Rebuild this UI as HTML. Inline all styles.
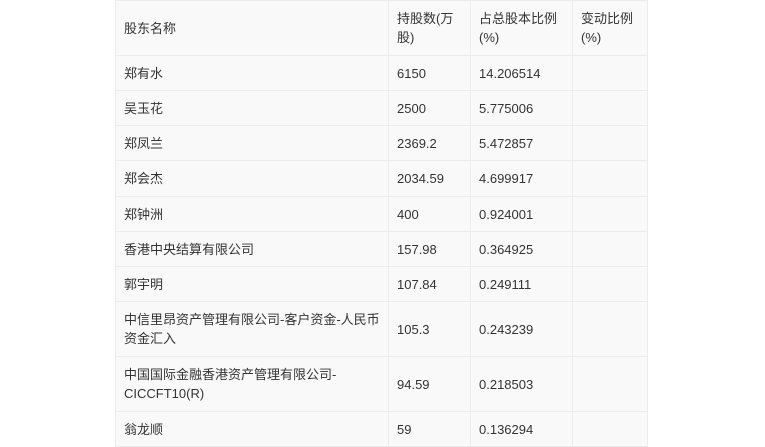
<!DOCTYPE html>
<html><head><meta charset="utf-8"><style>
html,body{margin:0;padding:0;background:#fff;width:765px;height:447px;overflow:hidden}
table{position:absolute;left:115px;top:0;border-collapse:collapse;font-family:"Liberation Sans","Noto Sans CJK SC",sans-serif;font-size:13px;color:#333;background:#f9f9f9}
td{border:1px solid #ececec;padding:0 8px;vertical-align:middle;line-height:19px}
</style></head><body>
<table>
<colgroup><col style="width:273px"><col style="width:82px"><col style="width:102px"><col style="width:75px"></colgroup>
<tr style="height:55px"><td>股东名称</td><td>持股数(万股)</td><td>占总股本比例(%)</td><td>变动比例(%)</td></tr>
<tr style="height:35px"><td>郑有水</td><td>6150</td><td>14.206514</td><td></td></tr>
<tr style="height:35px"><td>吴玉花</td><td>2500</td><td>5.775006</td><td></td></tr>
<tr style="height:35px"><td>郑凤兰</td><td>2369.2</td><td>5.472857</td><td></td></tr>
<tr style="height:36px"><td>郑会杰</td><td>2034.59</td><td>4.699917</td><td></td></tr>
<tr style="height:35px"><td>郑钟洲</td><td>400</td><td>0.924001</td><td></td></tr>
<tr style="height:35px"><td>香港中央结算有限公司</td><td>157.98</td><td>0.364925</td><td></td></tr>
<tr style="height:35px"><td>郭宇明</td><td>107.84</td><td>0.249111</td><td></td></tr>
<tr style="height:55px"><td>中信里昂资产管理有限公司-客户资金-人民币资金汇入</td><td>105.3</td><td>0.243239</td><td></td></tr>
<tr style="height:55px"><td>中国国际金融香港资产管理有限公司-CICCFT10(R)</td><td>94.59</td><td>0.218503</td><td></td></tr>
<tr style="height:35px"><td>翁龙顺</td><td>59</td><td>0.136294</td><td></td></tr>
</table>
</body></html>
